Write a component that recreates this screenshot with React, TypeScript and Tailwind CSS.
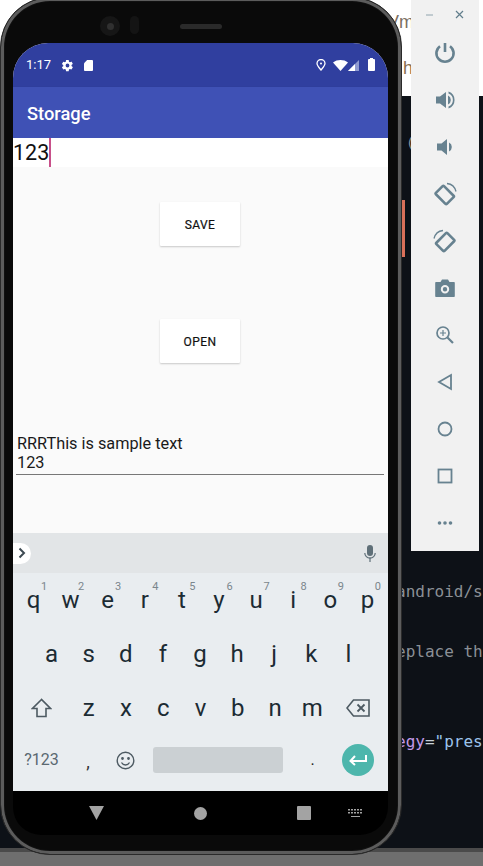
import React from "react";

const ink = "#678290";

function Key({ c, n }: { c: string; n?: string }) {
  return (
    <div className="relative flex-1 h-full flex items-center justify-center text-[24px] text-[#1c2b33]">
      <span>{c}</span>
      {n && <span className="absolute top-[8px] right-[5px] text-[11px] leading-none text-[#7b868c]">{n}</span>}
    </div>
  );
}

function ToolIcon({ children }: { children: React.ReactNode }) {
  return <div className="h-[47px] flex items-center justify-center">{children}</div>;
}

function SidePanel() {
  return (
    <div className="absolute left-[411px] top-0 w-[68px] h-[551px] bg-[#f1f1f1] flex flex-col items-center">
      <div className="w-full h-[29px] flex items-center justify-between pl-[15px] pr-[15px]">
        <svg width="8" height="8" viewBox="0 0 8 8"><path d="M0 4h7" stroke="#90a4ae" strokeWidth="1" /></svg>
        <svg width="9" height="9" viewBox="0 0 9 9"><path d="M1 1l7 7M8 1L1 8" stroke="#607d8b" strokeWidth="1.2" /></svg>
      </div>
      <div className="flex flex-col">
        <ToolIcon>
          <svg width="22" height="22" viewBox="0 0 22 22" fill="none" stroke={ink} strokeWidth="2.6">
            <path d="M11 1v9" />
            <path d="M6 4.200a8.600 8.600 0 1 0 10 0" />
          </svg>
        </ToolIcon>
        <ToolIcon>
          <svg width="22" height="22" viewBox="0 0 22 22" fill={ink}>
            <path d="M2 7.500h4L12 3v16l-6-4.500H2z" />
            <path d="M14 6.500a5 5 0 0 1 0 9z" />
            <path d="M14.500 2.500a9 9 0 0 1 0 17v-2a7 7 0 0 0 0-13z" />
          </svg>
        </ToolIcon>
        <ToolIcon>
          <svg width="22" height="22" viewBox="0 0 22 22" fill={ink}>
            <path d="M3 7.500h4.500L13 3v16l-5.500-4.500H3z" />
            <path d="M15 6.500a5 5 0 0 1 0 9z" />
          </svg>
        </ToolIcon>
        <ToolIcon>
          <svg width="24" height="24" viewBox="0 0 24 24" fill="none" stroke={ink}>
            <rect x="4" y="7.250" width="15.500" height="11.500" rx="1" transform="rotate(45 11.750 13)" strokeWidth="2.600" />
            <path d="M14 1.500a10.500 10.500 0 0 1 9 8" strokeWidth="1.300" />
          </svg>
        </ToolIcon>
        <ToolIcon>
          <svg width="24" height="24" viewBox="0 0 24 24" fill="none" stroke={ink}>
            <rect x="4.500" y="7.250" width="15.500" height="11.500" rx="1" transform="rotate(-45 12.250 13)" strokeWidth="2.600" />
            <path d="M10 1.500a10.500 10.500 0 0 0-9 8" strokeWidth="1.300" />
          </svg>
        </ToolIcon>
        <ToolIcon>
          <svg width="20" height="20" viewBox="0 0 20 20" fill={ink}>
            <path fillRule="evenodd" d="M1 4h4.500L7 1.500h6L14.500 4H19a.8.8 0 0 1 .8.8v13.400a.8.8 0 0 1-.8.8H1a.8.8 0 0 1-.8-.8V4.800A.8.8 0 0 1 1 4zm9 3a4.200 4.200 0 1 0 0 8.400A4.200 4.200 0 0 0 10 7zm0 2a2.200 2.200 0 1 1 0 4.400A2.200 2.200 0 0 1 10 9z" />
          </svg>
        </ToolIcon>
        <ToolIcon>
          <svg width="20" height="20" viewBox="0 0 20 20" fill="none" stroke={ink}>
            <circle cx="8" cy="8" r="6" strokeWidth="1.700" />
            <path d="M12.500 12.500L18 18" strokeWidth="2.200" />
            <path d="M8 5v6M5 8h6" strokeWidth="1.200" />
          </svg>
        </ToolIcon>
        <ToolIcon>
          <svg width="16" height="18" viewBox="0 0 16 18" fill="none" stroke={ink} strokeWidth="1.800">
            <path d="M14 2v14L2 9z" />
          </svg>
        </ToolIcon>
        <ToolIcon>
          <svg width="16" height="16" viewBox="0 0 16 16" fill="none" stroke={ink} strokeWidth="1.800">
            <circle cx="8" cy="8" r="6.500" />
          </svg>
        </ToolIcon>
        <ToolIcon>
          <svg width="16" height="16" viewBox="0 0 16 16" fill="none" stroke={ink} strokeWidth="1.800">
            <rect x="1.500" y="1.500" width="13" height="13" />
          </svg>
        </ToolIcon>
        <ToolIcon>
          <svg width="16" height="6" viewBox="0 0 16 6" fill={ink}>
            <circle cx="2.500" cy="3" r="1.800" />
            <circle cx="8" cy="3" r="1.800" />
            <circle cx="13.500" cy="3" r="1.800" />
          </svg>
        </ToolIcon>
      </div>
    </div>
  );
}

function Desktop() {
  return (
    <>
      <div className="absolute left-0 top-0 w-[483px] h-[96px] bg-white" />
      <div className="absolute left-0 top-[96px] w-[483px] h-[752px] bg-[#0d1117]" />
      <div className="absolute left-0 top-[848px] w-[483px] h-[4px] bg-[#4a4a4a]" />
      <div className="absolute left-0 top-[852px] w-[483px] h-[14px] bg-[#6e6e6e]" />
      <span className="absolute left-[387px] top-[12px] text-[18px] leading-[20px] text-[#7b6f63] font-['Liberation_Sans',sans-serif]">Vm</span>
      <span className="absolute left-[403px] top-[58px] text-[18px] leading-[20px] text-[#8a6f50] font-['Liberation_Sans',sans-serif]">h</span>
      <div className="absolute left-[402px] top-[200px] w-[3px] h-[57px] bg-[#d9705a]" />
      <span className="absolute left-[406px] top-[134px] text-[14px] leading-[18px] text-[#8b9096] font-['DejaVu_Sans_Mono',monospace]">(</span>
      <div className="absolute left-[396px] top-[582px] w-[87px] overflow-hidden font-['DejaVu_Sans_Mono',monospace] text-[16px] leading-[20px] whitespace-nowrap">
        <div className="text-[#8b9096]">android/s</div>
        <div className="mt-[40px] text-[#8b9096]">eplace th</div>
        <div className="mt-[70px] text-[#9cc4ec]">
          <span className="text-[#c39ae8]">egy</span>
          <span className="text-[#c9d1d9]">=</span>"pres
        </div>
      </div>
    </>
  );
}

function StatusBar() {
  return (
    <div className="h-[44px] bg-[#303f9f] flex items-center justify-between pl-[13px] pr-[13px] text-white text-[13px]">
      <div className="flex items-center gap-[10px]">
        <span>1:17</span>
        <div className="flex items-center gap-[10px]">
          <svg width="13" height="13" viewBox="0 0 24 24" fill="white">
            <path d="M19.400 13c.04-.32.06-.66.06-1s-.02-.68-.07-1l2.170-1.700a.5.5 0 0 0 .12-.64l-2.050-3.550a.5.5 0 0 0-.62-.22l-2.550 1.030a7.500 7.500 0 0 0-1.730-1l-.38-2.720A.5.5 0 0 0 13.840 2H9.740a.5.500 0 0 0-.5.42l-.38 2.720c-.62.26-1.200.6-1.730 1L4.580 5.100a.5.500 0 0 0-.62.220L1.910 8.870a.5.500 0 0 0 .12.640L4.200 11.200c-.05.320-.08.660-.08 1s.03.680.07 1l-2.170 1.700a.5.500 0 0 0-.12.640l2.050 3.550c.13.220.39.310.62.220l2.550-1.030c.53.400 1.110.740 1.730 1l.38 2.720c.04.240.25.420.5.420h4.100c.25 0 .46-.18.500-.42l.38-2.720c.62-.26 1.200-.6 1.730-1l2.550 1.030c.23.090.49 0 .62-.22l2.050-3.550a.5.500 0 0 0-.12-.64zM12 15.500a3.500 3.500 0 1 1 0-7 3.500 3.500 0 0 1 0 7z" />
          </svg>
          <svg width="9" height="11" viewBox="0 0 10 12" fill="white">
            <path d="M3.500 0H9a1 1 0 0 1 1 1v10a1 1 0 0 1-1 1H1a1 1 0 0 1-1-1V3.500z" />
          </svg>
        </div>
      </div>
      <div className="flex items-center gap-[7px]">
        <svg width="10" height="12" viewBox="0 0 10 12" fill="none" stroke="white" strokeWidth="1.300">
          <path d="M5 11C3 8.500 1 6.500 1 4.500a4 4 0 0 1 8 0C9 6.500 7 8.500 5 11z" />
          <circle cx="5" cy="4.500" r="1" fill="white" stroke="none" />
        </svg>
        <div className="flex items-end">
          <svg width="15" height="11" viewBox="0 0 15 11" fill="white">
            <path d="M0 2.500C4 -.800 11 -.800 15 2.500L7.500 11z" />
          </svg>
          <svg width="12" height="11" viewBox="0 0 12 11">
            <path d="M11 0v11H0z" fill="#8f9ad0" />
            <path d="M7 4v7H0z" fill="white" />
          </svg>
        </div>
        <div className="relative ml-[1px] w-[7px] h-[12px] bg-white rounded-[1px]">
          <div className="absolute -top-[1px] left-[2px] w-[3px] h-[1px] bg-white" />
        </div>
      </div>
    </div>
  );
}

function Button({ label }: { label: string }) {
  return (
    <div className="w-[80px] h-[44px] bg-white shadow-[0_1px_2px_rgba(0,0,0,0.2)] rounded-[1px] flex items-center justify-center pt-[1px] text-[12px] font-normal text-[#111] tracking-[0.4px] [-webkit-text-stroke:0.2px_#111]">
      {label}
    </div>
  );
}

const row1: [string, string][] = [["q", "1"], ["w", "2"], ["e", "3"], ["r", "4"], ["t", "5"], ["y", "6"], ["u", "7"], ["i", "8"], ["o", "9"], ["p", "0"]];

function Keyboard() {
  return (
    <div className="h-[258px] bg-[#e9edf0] flex flex-col">
      <div className="h-[40px] bg-[#e2e5e7] flex items-center justify-between pr-[12px]">
        <div className="w-[18px] h-[21px] bg-white rounded-r-full flex items-center justify-center pr-[1px]">
          <svg width="8" height="12" viewBox="0 0 8 12" fill="none" stroke="#3d4a52" strokeWidth="2">
            <path d="M1.500 1.500L6 6l-4.500 4.500" />
          </svg>
        </div>
        <svg width="12" height="17" viewBox="0 0 12 17" fill="#5f6f78">
          <rect x="3" y="0" width="6" height="11" rx="3" />
          <path d="M0.800 8a5.200 5.200 0 0 0 10.400 0" fill="none" stroke="#5f6f78" strokeWidth="1.200" />
          <rect x="5.400" y="12.500" width="1.200" height="4.500" />
        </svg>
      </div>
      <div className="h-[54px] mx-[2px] flex">
        {row1.map(([c, n]) => <Key key={c} c={c} n={n} />)}
      </div>
      <div className="h-[54px] pl-[20px] pr-[21px] flex">
        {["a", "s", "d", "f", "g", "h", "j", "k", "l"].map((c) => <Key key={c} c={c} />)}
      </div>
      <div className="h-[54px] flex items-center">
        <div className="w-[57px] flex justify-center">
          <svg width="21" height="20" viewBox="0 0 21 20" fill="none" stroke="#4d5a62" strokeWidth="1.600">
            <path d="M10.500 1.500L1.500 10.500H6V18.500H15V10.500H19.500z" />
          </svg>
        </div>
        <div className="flex-1 h-full flex">
          {["z", "x", "c", "v", "b", "n", "m"].map((c) => <Key key={c} c={c} />)}
        </div>
        <div className="w-[57px] flex justify-center pr-[3px]">
          <svg width="24" height="18" viewBox="0 0 24 18" fill="none" stroke="#4d5a62" strokeWidth="1.600">
            <path d="M7.500 1H23v16H7.500L1 9z" />
            <path d="M11.500 5.500l7 7M18.500 5.500l-7 7" strokeWidth="1.800" />
          </svg>
        </div>
      </div>
      <div className="h-[50px] flex items-center">
        <div className="w-[57px] text-center text-[16px] text-[#5a6870]">?123</div>
        <div className="w-[36px] text-center text-[18px] text-[#333] leading-none pt-[4px]">,</div>
        <div className="w-[38px] flex justify-center">
          <svg width="19" height="19" viewBox="0 0 19 19" fill="none" stroke="#4d5a62" strokeWidth="1.400">
            <circle cx="9.500" cy="9.500" r="8.300" />
            <circle cx="6.500" cy="7.500" r="0.700" fill="#4d5a62" />
            <circle cx="12.500" cy="7.500" r="0.700" fill="#4d5a62" />
            <path d="M5.500 11.500a4.500 4.500 0 0 0 8 0" />
          </svg>
        </div>
        <div className="ml-[9px] w-[130px] h-[26px] bg-[#cbd0d3] rounded-[3px]" />
        <div className="flex-1 text-center text-[16px] text-[#222]">.</div>
        <div className="mr-[14px] w-[32px] h-[32px] rounded-full bg-[#4db6ac] flex items-center justify-center">
          <svg width="18" height="12" viewBox="0 0 18 12" fill="none" stroke="white" strokeWidth="2">
            <path d="M17 1v6H2" />
            <path d="M6 2L1.500 7 6 11" />
          </svg>
        </div>
      </div>
    </div>
  );
}

function NavBar() {
  return (
    <div className="h-[44px] bg-black relative flex items-center justify-between pl-[76px] pr-[77px] rounded-b-[28px]">
      <svg width="15" height="14" viewBox="0 0 15 14" fill="#a3a3a3"><path d="M0 0h15L7.500 14z" /></svg>
      <div className="w-[13px] h-[13px] rounded-full bg-[#a3a3a3]" />
      <div className="w-[14px] h-[14px] rounded-[1px] bg-[#a3a3a3]" />
      <svg className="absolute right-[25px] top-[18px]" width="15" height="10" viewBox="0 0 15 10" fill="#a3a3a3">
        <path d="M0 0h2v1.500H0zM3 0h2v1.500H3zM6 0h2v1.500H6zM9 0h2v1.500H9zM12 0h2v1.500h-2zM0 3h2v1.500H0zM3 3h2v1.500H3zM6 3h2v1.500H6zM9 3h2v1.500H9zM12 3h2v1.500h-2zM3 7h9v1H3z" />
      </svg>
    </div>
  );
}

function Phone() {
  return (
    <div className="absolute left-0 -top-[3px] w-[402px] h-[858px] rounded-[50px] bg-[#0a0a0a] border border-[#2a2a2a] shadow-[inset_0_0_0_3px_#5c5c5c,inset_0_0_0_4px_#111] pt-[45px] pl-[12px] pr-[13px]">
      <div className="absolute left-[99px] top-[18px] w-[20px] h-[20px] rounded-full bg-[#161616] flex items-center justify-center">
        <div className="w-[7px] h-[7px] rounded-full bg-[#303030]" />
      </div>
      <div className="absolute left-[129px] top-[18px] w-[9px] h-[18px] rounded-full bg-[#141414]" />
      <div className="absolute left-[179px] top-[26px] w-[42px] h-[5px] rounded-full bg-[#2a2a2a]" />
      <div className="w-[375px] h-[748px] rounded-t-[35px] overflow-hidden flex flex-col bg-[#fafafa]">
        <StatusBar />
        <div className="h-[51px] bg-[#3f51b5] flex items-center pl-[14px] pt-[2px] text-[18.300px] font-medium text-white shadow-[0_1px_2px_rgba(0,0,0,0.25)]">Storage</div>
        <div className="h-[29px] bg-white flex items-center text-[21.500px] leading-none text-[#111]">
          <span>123</span>
          <div className="w-[2px] h-[29px] bg-[#c8508a]" />
        </div>
        <div className="flex-1 flex flex-col items-center pr-[1px]">
          <div className="mt-[35px]"><Button label="SAVE" /></div>
          <div className="mt-[73px]"><Button label="OPEN" /></div>
          <div className="mt-[71px] w-[368px] border-b border-[#777] text-[16.300px] leading-[19px] text-[#1a1a1a] pl-[1px] pb-[2px]">
            <div>RRRThis is sample text</div>
            <div>123</div>
          </div>
        </div>
        <Keyboard />
      </div>
      <NavBar />
    </div>
  );
}

export default function App() {
  return (
    <div className="relative w-[483px] h-[866px] overflow-hidden font-['Roboto',sans-serif]">
      <Desktop />
      <Phone />
      <SidePanel />
    </div>
  );
}
